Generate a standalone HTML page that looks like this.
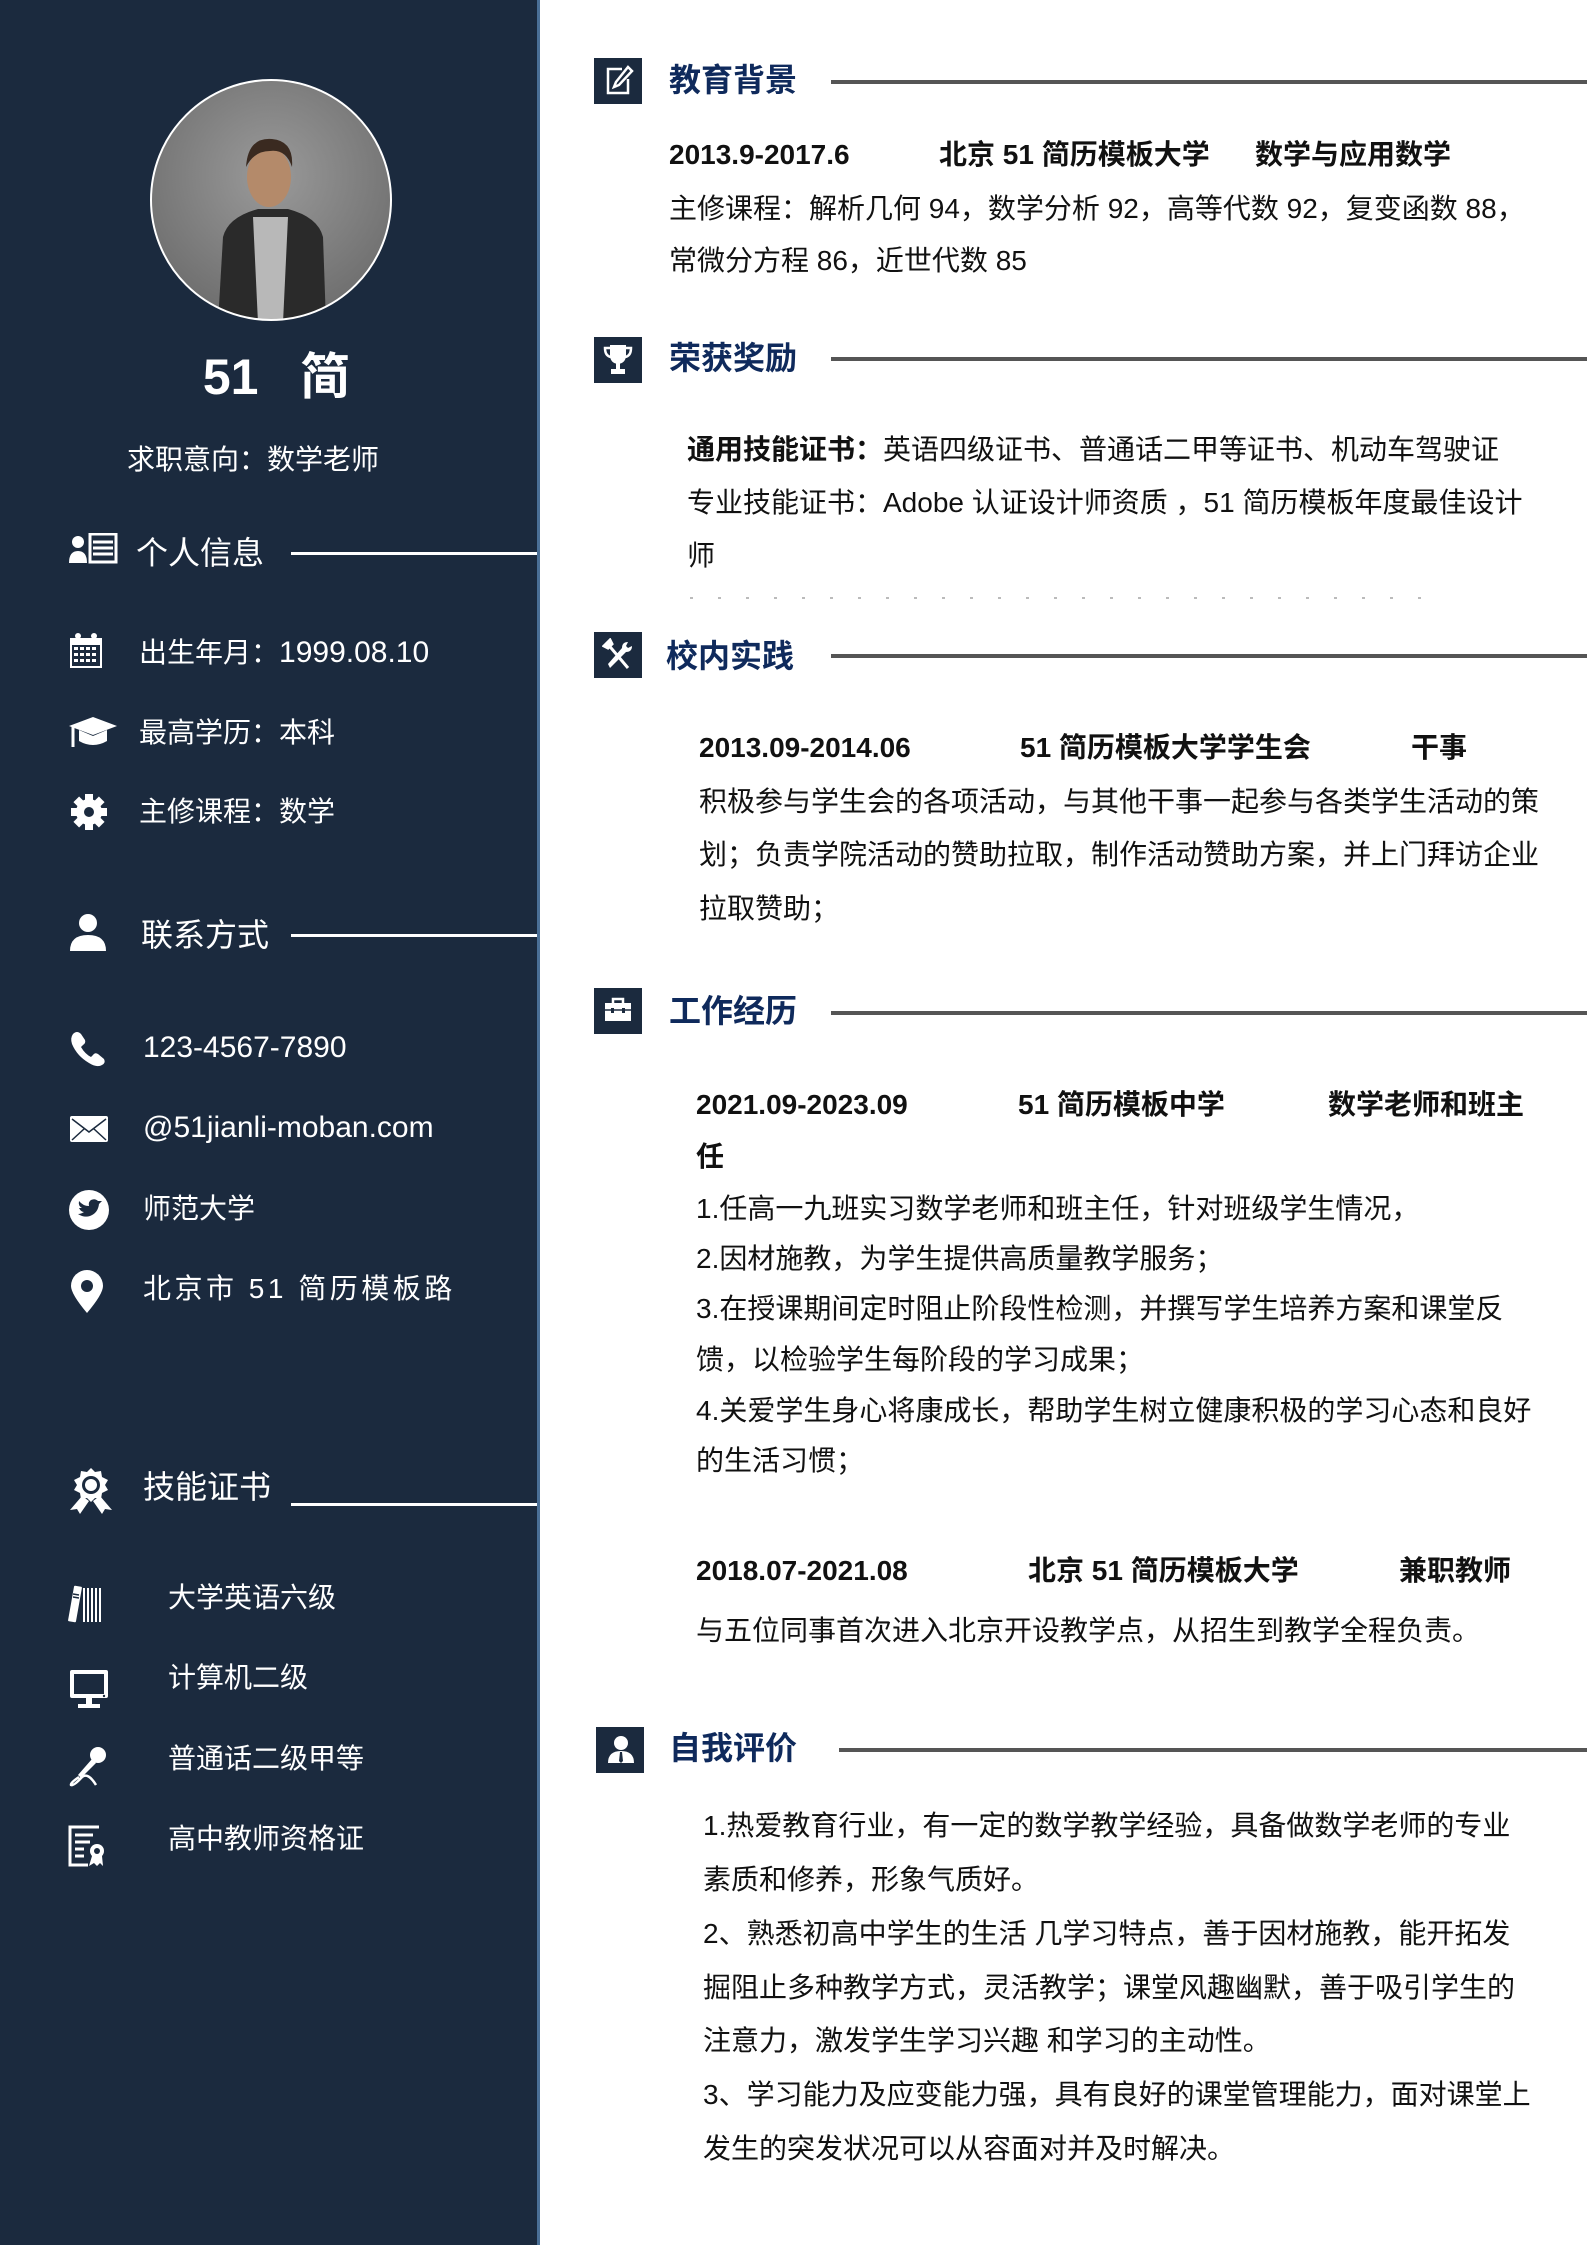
<!DOCTYPE html>
<html><head><meta charset="utf-8"><style>
*{margin:0;padding:0}
body{width:1587px;height:2245px;position:relative;background:#fff;font-family:"Liberation Sans","Noto Sans CJK SC",sans-serif;overflow:hidden}
.side{position:absolute;left:0;top:0;width:537px;height:2245px;background:#1b2a3e;border-right:3px solid #4a6f96}
.t{position:absolute;line-height:40px;white-space:nowrap}
.w{color:#fff;font-size:28px}
.w .l{font-size:30px}
.sh{color:#fff;font-size:32px}
.hl{position:absolute;height:3px;background:#fff;left:291px;width:246px}
.ic{position:absolute}
.box{position:absolute;width:48px;height:46px;background:#1b2a3e;left:594px}
.h{position:absolute;color:#0f2a5c;font-size:32px;font-weight:bold;line-height:40px;white-space:nowrap}
.gl{position:absolute;height:4px;background:#555;right:0}
.b{color:#111;font-size:28px}
.bb{color:#111;font-size:28px;font-weight:bold}
</style></head><body>
<div class="side"></div>
<svg class="ic" style="left:148px;top:77px" width="246" height="246" viewBox="0 0 246 246">
<defs><clipPath id="c"><circle cx="123" cy="123" r="120"/></clipPath>
<radialGradient id="g" cx="0.5" cy="0.4" r="0.6"><stop offset="0" stop-color="#9a9a9a"/><stop offset="1" stop-color="#6e6e6e"/></radialGradient></defs>
<g clip-path="url(#c)"><rect width="246" height="246" fill="url(#g)"/>
<path d="M70 246 L75 160 Q80 140 110 132 L140 132 Q170 140 175 160 L178 246Z" fill="#2a2a2a"/>
<path d="M105 140 L140 140 L135 246 L110 246Z" fill="#b8b8b8"/>
<ellipse cx="121" cy="100" rx="22" ry="30" fill="#b48a6a"/>
<path d="M98 90 Q100 60 124 62 Q146 64 144 90 Q138 72 122 74 Q106 74 98 90Z" fill="#3a2a20"/>
</g><circle cx="123" cy="123" r="120" fill="none" stroke="#fff" stroke-width="2"/></svg>
<div class="t" style="left:8px;width:537px;text-align:center;top:352px;line-height:50px;color:#fff;font-size:50px;font-weight:bold">51&nbsp;&nbsp;&nbsp;简</div>
<div class="t w" style="left:127px;top:440px">求职意向：数学老师</div>

<svg class="ic" style="left:69px;top:533px" width="52" height="40" viewBox="0 0 52 40"><circle cx="9" cy="9" r="6" fill="#fff"/><path d="M0 30 Q0 18 9 18 Q18 18 18 30Z" fill="#fff"/><rect x="21" y="1" width="26" height="28" fill="none" stroke="#fff" stroke-width="3"/><path d="M24 9H44M24 15H44M24 21H44" stroke="#fff" stroke-width="3"/></svg>
<div class="t sh" style="left:136px;top:533px">个人信息</div><div class="hl" style="top:552px"></div>
<svg class="ic" style="left:69px;top:632px" width="34" height="40" viewBox="0 0 34 40"><rect x="1" y="6" width="32" height="30" fill="#fff"/><rect x="3" y="13" width="28" height="21" fill="#1b2a3e"/><g fill="#fff"><rect x="5" y="15" width="4" height="3"/><rect x="11" y="15" width="4" height="3"/><rect x="17" y="15" width="4" height="3"/><rect x="23" y="15" width="4" height="3"/><rect x="5" y="21" width="4" height="3"/><rect x="11" y="21" width="4" height="3"/><rect x="17" y="21" width="4" height="3"/><rect x="23" y="21" width="4" height="3"/><rect x="5" y="27" width="4" height="3"/><rect x="11" y="27" width="4" height="3"/><rect x="17" y="27" width="4" height="3"/><rect x="23" y="27" width="4" height="3"/><circle cx="9" cy="4" r="3"/><circle cx="25" cy="4" r="3"/></g></svg>
<div class="t w" style="left:139px;top:633px">出生年月：<span class="l">1999.08.10</span></div>
<svg class="ic" style="left:68px;top:713px" width="50" height="40" viewBox="0 0 50 40"><path d="M25 4 L49 13 L25 22 L1 13Z" fill="#fff"/><path d="M11 17 V28 Q25 36 39 28 V17 L25 23Z" fill="#fff"/><path d="M5 14 V34" stroke="#fff" stroke-width="3"/></svg>
<div class="t w" style="left:139px;top:713px">最高学历：本科</div>
<svg class="ic" style="left:69px;top:792px" width="40" height="40" viewBox="0 0 40 40"><g fill="#fff"><circle cx="20" cy="20" r="13"/><rect x="16" y="2" width="8" height="36"/><rect x="2" y="16" width="36" height="8"/><rect x="16" y="2" width="8" height="36" transform="rotate(45 20 20)"/><rect x="16" y="2" width="8" height="36" transform="rotate(-45 20 20)"/></g><circle cx="20" cy="20" r="5" fill="#1b2a3e"/></svg>
<div class="t w" style="left:139px;top:792px">主修课程：数学</div>

<svg class="ic" style="left:69px;top:913px" width="38" height="40" viewBox="0 0 38 40"><circle cx="19" cy="10" r="9" fill="#fff"/><path d="M1 38 Q1 22 19 22 Q37 22 37 38Z" fill="#fff"/></svg>
<div class="t sh" style="left:141px;top:915px">联系方式</div><div class="hl" style="top:934px"></div>
<svg class="ic" style="left:69px;top:1030px" width="38" height="38" viewBox="0 0 38 38"><path d="M4 4 Q8 0 12 4 L16 10 Q17 13 14 15 L12 17 Q16 24 22 27 L24 25 Q26 22 29 24 L35 29 Q37 33 33 35 Q28 38 20 33 Q8 26 3 14 Q1 8 4 4Z" fill="#fff"/></svg>
<div class="t w" style="left:143px;top:1028px"><span class="l">123-4567-7890</span></div>
<svg class="ic" style="left:69px;top:1115px" width="40" height="28" viewBox="0 0 40 28"><rect x="1" y="1" width="38" height="26" rx="2" fill="#fff"/><path d="M3 4 L20 17 L37 4 M3 25 L15 14 M37 25 L25 14" stroke="#1b2a3e" stroke-width="1.5" fill="none"/></svg>
<div class="t w" style="left:143px;top:1108px"><span class="l">@51jianli-moban.com</span></div>
<svg class="ic" style="left:68px;top:1189px" width="42" height="42" viewBox="0 0 42 42"><circle cx="21" cy="21" r="20" fill="#fff"/><path d="M10 25 Q16 29 22 27 Q30 24 31 15 L34 12 L30 12 Q27 9 23 11 Q20 13 21 17 Q15 17 11 12 Q10 17 14 19 L11 19 Q13 23 16 23 Q13 25 10 25Z" fill="#1b2a3e"/></svg>
<div class="t w" style="left:143px;top:1189px">师范大学</div>
<svg class="ic" style="left:70px;top:1270px" width="34" height="44" viewBox="0 0 34 44"><path d="M17 43 Q1 24 1 16 A16 16 0 0 1 33 16 Q33 24 17 43Z" fill="#fff"/><circle cx="17" cy="16" r="6" fill="#1b2a3e"/></svg>
<div class="t w" style="left:143px;top:1269px;letter-spacing:3.5px">北京市 51 简历模板路</div>

<svg class="ic" style="left:68px;top:1466px" width="46" height="48" viewBox="0 0 46 48"><path d="M23 2 L27 6 L33 5 L34 11 L40 14 L37 19 L40 24 L34 27 L33 33 L27 32 L23 36 L19 32 L13 33 L12 27 L6 24 L9 19 L6 14 L12 11 L13 5 L19 6Z" fill="#fff"/><circle cx="23" cy="19" r="9" fill="#1b2a3e"/><circle cx="23" cy="19" r="6" fill="#fff"/><path d="M14 30 L2 44 L9 43 L12 48 L21 35Z M32 30 L44 44 L37 43 L34 48 L25 35Z" fill="#fff"/></svg>
<div class="t sh" style="left:143px;top:1467px">技能证书</div><div class="hl" style="top:1503px"></div>
<svg class="ic" style="left:68px;top:1585px" width="36" height="38" viewBox="0 0 36 38"><rect x="3" y="1" width="8" height="36" rx="1" fill="#fff" transform="rotate(10 7 19)"/><path d="M5 9 L11 10 M5 12 L11 13" stroke="#1b2a3e" stroke-width="1.5"/><g fill="#fff"><rect x="15" y="3" width="2" height="34"/><rect x="19" y="3" width="2" height="34"/><rect x="23" y="3" width="2" height="34"/><rect x="27" y="3" width="2" height="34"/><rect x="31" y="3" width="2" height="34"/></g></svg>
<div class="t w" style="left:168px;top:1578px">大学英语六级</div>
<svg class="ic" style="left:68px;top:1668px" width="42" height="42" viewBox="0 0 42 42"><rect x="2" y="2" width="38" height="28" rx="2" fill="#fff"/><rect x="6" y="6" width="30" height="20" fill="#1b2a3e"/><circle cx="36" cy="28" r="1.2" fill="#1b2a3e"/><rect x="18" y="30" width="6" height="6" fill="#fff"/><rect x="10" y="36" width="22" height="4" fill="#fff"/></svg>
<div class="t w" style="left:168px;top:1658px">计算机二级</div>
<svg class="ic" style="left:68px;top:1745px" width="40" height="42" viewBox="0 0 40 42"><circle cx="30" cy="10" r="8" fill="#fff"/><path d="M24 14 L10 30 L13 33 L28 18Z" fill="#fff"/><path d="M11 32 Q2 38 3 40 Q6 41 14 32 Q20 27 28 40" stroke="#fff" stroke-width="2.5" fill="none"/></svg>
<div class="t w" style="left:168px;top:1739px">普通话二级甲等</div>
<svg class="ic" style="left:68px;top:1825px" width="40" height="42" viewBox="0 0 40 42"><path d="M31 2 H2 V40 H20" stroke="#fff" stroke-width="3" fill="none"/><path d="M7 10 H25 M7 17 H22 M7 24 H16 M7 31 H16" stroke="#fff" stroke-width="3"/><circle cx="29" cy="26" r="7" fill="#fff"/><circle cx="29" cy="26" r="3" fill="#1b2a3e"/><path d="M24 31 L21 41 L26 38 L29 41 L32 38 L35 41 L34 31" fill="#fff"/></svg>
<div class="t w" style="left:168px;top:1819px">高中教师资格证</div>

<div class="box" style="top:58px"></div>
<svg class="ic" style="left:604px;top:65px" width="30" height="32" viewBox="0 0 30 32"><path d="M18 4 H4 V28 H24 V14" stroke="#fff" stroke-width="2.5" fill="none"/><path d="M24 2 L28 6 L15 20 L10 22 L12 17Z" stroke="#fff" stroke-width="2.5" fill="none"/></svg>
<div class="h" style="left:669px;top:60px">教育背景</div><div class="gl" style="left:831px;top:80px"></div>
<div class="t bb" style="left:669px;top:135px">2013.9-2017.6</div>
<div class="t bb" style="left:939px;top:135px">北京 51 简历模板大学</div>
<div class="t bb" style="left:1255px;top:135px">数学与应用数学</div>
<div class="t b" style="left:669px;top:189px">主修课程：解析几何 94，数学分析 92，高等代数 92，复变函数 88，</div>
<div class="t b" style="left:669px;top:241px">常微分方程 86，近世代数 85</div>

<div class="box" style="top:337px"></div>
<svg class="ic" style="left:603px;top:343px" width="30" height="34" viewBox="0 0 30 34"><path d="M7 2 H23 V12 Q23 20 15 21 Q7 20 7 12Z" fill="#fff"/><path d="M7 5 H2 Q2 13 8 14 M23 5 H28 Q28 13 22 14" stroke="#fff" stroke-width="2.5" fill="none"/><rect x="13" y="20" width="4" height="6" fill="#fff"/><rect x="8" y="26" width="14" height="5" fill="#fff"/></svg>
<div class="h" style="left:669px;top:338px">荣获奖励</div><div class="gl" style="left:831px;top:357px"></div>
<div class="t b" style="left:687px;top:430px"><b>通用技能证书：</b>英语四级证书、普通话二甲等证书、机动车驾驶证</div>
<div class="t b" style="left:687px;top:483px">专业技能证书：Adobe 认证设计师资质 ，51 简历模板年度最佳设计</div>
<div class="t b" style="left:687px;top:536px">师</div>
<div style="position:absolute;left:690px;top:597px;width:740px;height:2px;background:repeating-linear-gradient(90deg,#bbb 0 3px,transparent 3px 28px)"></div>

<div class="box" style="top:632px"></div>
<svg class="ic" style="left:602px;top:638px" width="32" height="34" viewBox="0 0 32 34"><path d="M4 4 L26 30 M8 2 L2 8 L6 10 L10 6Z" stroke="#fff" stroke-width="3" fill="#fff"/><path d="M26 4 Q20 4 20 10 L6 26 L8 30 L24 14 Q30 14 30 8 L26 10 L24 8Z" fill="#fff"/></svg>
<div class="h" style="left:666px;top:636px">校内实践</div><div class="gl" style="left:831px;top:654px"></div>
<div class="t bb" style="left:699px;top:728px">2013.09-2014.06</div>
<div class="t bb" style="left:1020px;top:728px">51 简历模板大学学生会</div>
<div class="t bb" style="left:1411px;top:728px">干事</div>
<div class="t b" style="left:699px;top:782px">积极参与学生会的各项活动，与其他干事一起参与各类学生活动的策</div>
<div class="t b" style="left:699px;top:835px">划；负责学院活动的赞助拉取，制作活动赞助方案，并上门拜访企业</div>
<div class="t b" style="left:699px;top:889px">拉取赞助；</div>

<div class="box" style="top:988px"></div>
<svg class="ic" style="left:603px;top:994px" width="30" height="32" viewBox="0 0 30 32"><path d="M10 9 V5 H20 V9" stroke="#fff" stroke-width="2.5" fill="none"/><rect x="2" y="9" width="26" height="18" fill="#fff"/><path d="M2 16 H28" stroke="#1b2a3e" stroke-width="1.5"/><rect x="8" y="14" width="3" height="5" fill="#1b2a3e"/><rect x="19" y="14" width="3" height="5" fill="#1b2a3e"/></svg>
<div class="h" style="left:669px;top:991px">工作经历</div><div class="gl" style="left:831px;top:1011px"></div>
<div class="t bb" style="left:696px;top:1085px">2021.09-2023.09</div>
<div class="t bb" style="left:1018px;top:1085px">51 简历模板中学</div>
<div class="t bb" style="left:1328px;top:1085px">数学老师和班主</div>
<div class="t bb" style="left:696px;top:1137px">任</div>
<div class="t b" style="left:696px;top:1189px">1.任高一九班实习数学老师和班主任，针对班级学生情况，</div>
<div class="t b" style="left:696px;top:1239px">2.因材施教，为学生提供高质量教学服务；</div>
<div class="t b" style="left:696px;top:1289px">3.在授课期间定时阻止阶段性检测，并撰写学生培养方案和课堂反</div>
<div class="t b" style="left:696px;top:1340px">馈，以检验学生每阶段的学习成果；</div>
<div class="t b" style="left:696px;top:1391px">4.关爱学生身心将康成长，帮助学生树立健康积极的学习心态和良好</div>
<div class="t b" style="left:696px;top:1441px">的生活习惯；</div>
<div class="t bb" style="left:696px;top:1551px">2018.07-2021.08</div>
<div class="t bb" style="left:1028px;top:1551px">北京 51 简历模板大学</div>
<div class="t bb" style="left:1399px;top:1551px">兼职教师</div>
<div class="t b" style="left:696px;top:1611px">与五位同事首次进入北京开设教学点，从招生到教学全程负责。</div>

<div class="box" style="top:1727px;left:596px"></div>
<svg class="ic" style="left:606px;top:1733px" width="30" height="34" viewBox="0 0 30 34"><circle cx="15" cy="10" r="7" fill="#fff"/><path d="M2 30 Q2 18 15 18 Q28 18 28 30Z" fill="#fff"/><path d="M14 19 L16 19 L17 28 L15 30 L13 28Z" fill="#1b2a3e"/></svg>
<div class="h" style="left:669px;top:1728px">自我评价</div><div class="gl" style="left:839px;top:1748px"></div>
<div class="t b" style="left:703px;top:1806px">1.热爱教育行业，有一定的数学教学经验，具备做数学老师的专业</div>
<div class="t b" style="left:703px;top:1860px">素质和修养，形象气质好。</div>
<div class="t b" style="left:703px;top:1914px">2、熟悉初高中学生的生活 几学习特点，善于因材施教，能开拓发</div>
<div class="t b" style="left:703px;top:1968px">掘阻止多种教学方式，灵活教学；课堂风趣幽默，善于吸引学生的</div>
<div class="t b" style="left:703px;top:2021px">注意力，激发学生学习兴趣 和学习的主动性。</div>
<div class="t b" style="left:703px;top:2075px">3、学习能力及应变能力强，具有良好的课堂管理能力，面对课堂上</div>
<div class="t b" style="left:703px;top:2129px">发生的突发状况可以从容面对并及时解决。</div>
</body></html>
